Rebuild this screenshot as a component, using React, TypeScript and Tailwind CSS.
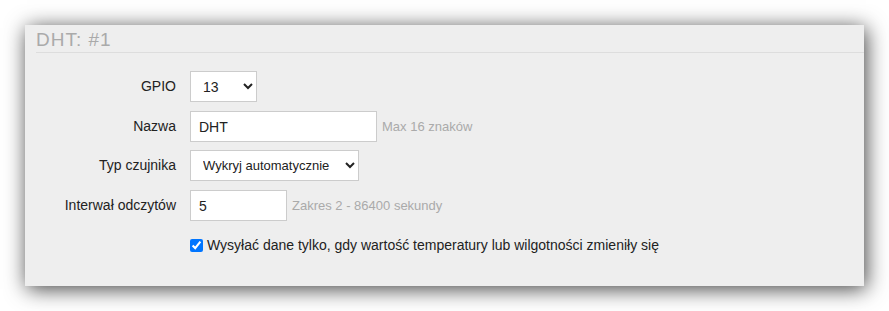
import { useState } from 'react';

const labelCls = 'w-[154px] shrink-0 text-right pr-[14px] text-[14px] text-[#222]';
const hintCls = 'ml-[5px] text-[13px] text-[#aaa]';

export default function App() {
    const [gpio, setGpio] = useState('13');
    const [name, setName] = useState('DHT');
    const [sensor, setSensor] = useState('auto');
    const [interval, setInterval] = useState('5');
    const [onlyChanges, setOnlyChanges] = useState(true);

    return (
        <div className="min-h-screen bg-white p-[25px]" style={{ fontFamily: '"Liberation Sans", Arial, sans-serif' }}>
            <div className="w-[839px] h-[261px] bg-[#eeeeee] shadow-[2px_3px_20px_rgba(0,0,0,0.75)] pl-[11px]">
                <div className="border-b border-[#dddddd] pt-[4px] pb-[2px]">
                    <h2 className="text-[19px] leading-[21px] text-[#aaaaaa] tracking-[1px]">DHT: #1</h2>
                </div>
                <div className="flex flex-col pt-[18px]">
                    <div className="flex items-center h-[31px]">
                        <label className={labelCls}>GPIO</label>
                        <select
                            value={gpio}
                            onChange={(e) => setGpio(e.target.value)}
                            className="w-[67px] h-[31px] bg-white border border-[#cccccc] pl-[8px] text-[14px] text-[#222]"
                        >
                            {['0', '2', '4', '5', '12', '13', '14', '15', '16'].map((p) => (
                                <option key={p} value={p}>{p}</option>
                            ))}
                        </select>
                    </div>
                    <div className="flex items-center h-[31px] mt-[9px]">
                        <label className={labelCls}>Nazwa</label>
                        <input
                            value={name}
                            onChange={(e) => setName(e.target.value)}
                            className="w-[187px] h-[31px] bg-white border border-[#cccccc] px-[8px] text-[14px] text-[#222] outline-none"
                        />
                        <span className={hintCls}>Max 16 znaków</span>
                    </div>
                    <div className="flex items-center h-[31px] mt-[8px]">
                        <label className={labelCls}>Typ czujnika</label>
                        <select
                            value={sensor}
                            onChange={(e) => setSensor(e.target.value)}
                            className="w-[169px] h-[31px] bg-white border border-[#cccccc] pl-[8px] text-[13px] text-[#222]"
                        >
                            <option value="auto">Wykryj automatycznie</option>
                            <option value="dht11">DHT11</option>
                            <option value="dht22">DHT22</option>
                        </select>
                    </div>
                    <div className="flex items-center h-[31px] mt-[9px]">
                        <label className={labelCls}>Interwał odczytów</label>
                        <input
                            value={interval}
                            onChange={(e) => setInterval(e.target.value)}
                            className="w-[97px] h-[31px] bg-white border border-[#cccccc] px-[8px] text-[14px] text-[#222] outline-none"
                        />
                        <span className={hintCls}>Zakres 2 - 86400 sekundy</span>
                    </div>
                    <div className="flex items-center mt-[14px] pl-[154px]">
                        <input
                            type="checkbox"
                            checked={onlyChanges}
                            onChange={(e) => setOnlyChanges(e.target.checked)}
                            className="w-[13px] h-[13px] m-0 mr-[4px]"
                        />
                        <span className="text-[14px] leading-[20px] text-[#222]">
                            Wysyłać dane tylko, gdy wartość temperatury lub wilgotności zmieniły się
                        </span>
                    </div>
                </div>
            </div>
        </div>
    );
}
